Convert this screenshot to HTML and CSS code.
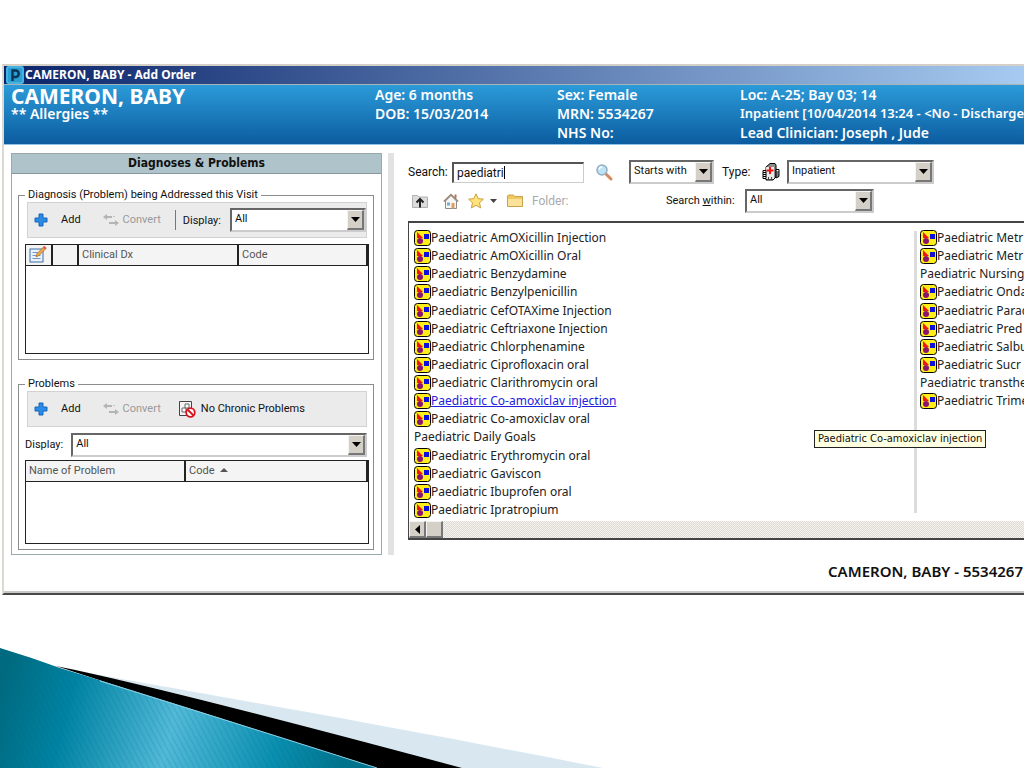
FILE: index.html
```html
<!DOCTYPE html>
<html lang="en">
<head>
    <meta charset="UTF-8">
    <meta name="viewport" content="width=device-width, initial-scale=1.0">
    <title>CAMERON, BABY - Add Order</title>
    <link rel="stylesheet" href="styles.css">
</head>
<body>
    <!-- shared icons -->
    <svg class="sprite" aria-hidden="true">
        <symbol id="careset" viewBox="0 0 17 16">
            <rect x="0.5" y="0.5" width="16" height="15" rx="3" fill="#ffee1a" stroke="#000"/>
            <path d="M3 2v6h6z" fill="#f01414"/>
            <circle cx="6" cy="11" r="3" fill="#8a1470"/>
            <rect x="10" y="4" width="5" height="5" fill="#1010dc"/>
        </symbol>
        <symbol id="plus" viewBox="0 0 14 14">
            <path d="M5 1h4v4h4v4h-4v4h-4v-4h-4v-4h4z" fill="#2b8be6" stroke="#1766b8"/>
        </symbol>
        <symbol id="convert" viewBox="0 0 16 12">
            <path d="M4 0v2h5v2h-5v2l-4-3zM12 6v2h-6v2h6v2l4-3z" fill="#b4b4b4"/>
            <path d="M10 2h2v1h-2z" fill="#c4c4c4"/>
        </symbol>
        <symbol id="down" viewBox="0 0 9 5">
            <path d="M0 0h9l-4.500 5z" fill="#000"/>
        </symbol>
    </svg>

    <div class="window">
        <header class="title-bar">
            <svg class="app-icon" viewBox="0 0 18 18" aria-hidden="true">
                <rect width="18" height="18" rx="2" fill="#2b9fd3"/>
                <rect x="1" y="1" width="16" height="16" rx="2" fill="none" stroke="#63c4ea"/>
                <path d="M6.500 15V4.500H9.500a3 3 0 0 1 0 6.500H6.500" fill="none" stroke="#0a3558" stroke-width="2.400"/>
            </svg>
            <span class="title">CAMERON, BABY - Add Order</span>
        </header>

        <section class="banner">
            <div class="banner-name">
                <h1>CAMERON, BABY</h1>
                <p>** Allergies **</p>
            </div>
            <div class="banner-col">
                <p>Age: 6 months</p>
                <p>DOB: 15/03/2014</p>
            </div>
            <div class="banner-col">
                <p>Sex: Female</p>
                <p>MRN: 5534267</p>
                <p>NHS No:</p>
            </div>
            <div class="banner-col">
                <p>Loc: A-25; Bay 03; 14</p>
                <p class="encounter">Inpatient [10/04/2014 13:24 - &lt;No - Discharge</p>
                <p>Lead Clinician: Joseph , Jude</p>
            </div>
        </section>

        <main class="content">
            <section class="problems-panel">
                <h2>Diagnoses &amp; Problems</h2>

                <fieldset class="group">
                    <legend>Diagnosis (Problem) being Addressed this Visit</legend>
                    <div class="toolbar">
                        <button type="button" class="btn-add"><svg class="icon-plus"><use href="#plus"/></svg>Add</button>
                        <button type="button" class="btn-convert" disabled><svg class="icon-convert"><use href="#convert"/></svg>Convert</button>
                        <label class="toolbar-label" for="dx-display">Display:</label>
                        <span class="combo">
                            <select id="dx-display"><option>All</option></select>
                            <span class="combo-btn"><svg><use href="#down"/></svg></span>
                        </span>
                    </div>
                    <div class="grid-box dx-box">
                        <table>
                            <colgroup><col class="col-icon"><col class="col-icon"><col class="col-dx"><col></colgroup>
                            <thead>
                                <tr>
                                    <th>
                                        <svg class="icon-note" viewBox="0 0 18 17" role="img" aria-label="Annotation">
                                            <rect x="1" y="3" width="13" height="13" fill="#eaf3fc" stroke="#3a6ea5"/>
                                            <path d="M3.500 6.500h6M3.500 9.500h8M3.500 12.500h8" stroke="#6d9bcb"/>
                                            <path d="M7 11l1-3.500 7-7 2 2-7 7z" fill="#f0a94a" stroke="#a5672a" stroke-width="0.700"/>
                                            <path d="M14 1.500l1.500-1.500 2 2-1.500 1.500z" fill="#e0554a"/>
                                        </svg>
                                    </th>
                                    <th></th>
                                    <th>Clinical Dx</th>
                                    <th>Code</th>
                                </tr>
                            </thead>
                        </table>
                    </div>
                </fieldset>

                <fieldset class="group">
                    <legend>Problems</legend>
                    <div class="toolbar">
                        <button type="button" class="btn-add"><svg class="icon-plus"><use href="#plus"/></svg>Add</button>
                        <button type="button" class="btn-convert" disabled><svg class="icon-convert"><use href="#convert"/></svg>Convert</button>
                        <button type="button" class="btn-chronic">
                            <svg class="icon-chronic" viewBox="0 0 17 17" aria-hidden="true">
                                <path d="M0.500 0.500h12v14h-12z" fill="#f4f4f4" stroke="#444"/>
                                <path d="M6 3h4v4h-4zM3 7h4v4h-4z" fill="#fff" stroke="#666"/>
                                <circle cx="11.500" cy="11.500" r="4.300" fill="#fff" stroke="#d8141c" stroke-width="1.800"/>
                                <path d="M8.500 8.500l6 6" stroke="#d8141c" stroke-width="1.800"/>
                            </svg>No Chronic Problems</button>
                    </div>
                    <div class="display-row">
                        <label for="problem-display">Display:</label>
                        <span class="combo">
                            <select id="problem-display"><option>All</option></select>
                            <span class="combo-btn"><svg><use href="#down"/></svg></span>
                        </span>
                    </div>
                    <div class="grid-box problem-box">
                        <table>
                            <colgroup><col class="col-problem"><col></colgroup>
                            <thead>
                                <tr>
                                    <th>Name of Problem</th>
                                    <th>Code <span class="sort-arrow"></span></th>
                                </tr>
                            </thead>
                        </table>
                    </div>
                </fieldset>
            </section>

            <div class="splitter"></div>

            <section class="orders">
                <div class="search-row">
                    <label class="search-label" for="search">Search:</label>
                    <span class="search-box"><input type="text" id="search" value="paediatri"><span class="caret"></span></span>
                    <svg class="icon-search" viewBox="0 0 17 17" role="img" aria-label="Search">
                        <path d="M10 10l5 5" stroke="#d98a5c" stroke-width="3" stroke-linecap="round"/>
                        <circle cx="6" cy="6" r="5" fill="#bfe3f5" stroke="#8fb0c4" stroke-width="1.500"/>
                        <path d="M3 5.500a3 3 0 0 1 3-2.500" fill="none" stroke="#fff" stroke-width="1.500"/>
                    </svg>
                    <span class="combo combo-match">
                        <select aria-label="Match"><option>Starts with</option></select>
                        <span class="combo-btn"><svg><use href="#down"/></svg></span>
                    </span>
                    <label class="type-label" for="type">Type:</label>
                    <svg class="icon-hospital" viewBox="0 0 18 18" aria-hidden="true">
                        <path d="M4 4l4-3.500h5l1 1.500v12l-3 3h-7z" fill="#8c8c8c" stroke="#000"/>
                        <path d="M4 4h8v12h-8z" fill="#e8e8e8"/>
                        <path d="M1 7.500h3v8h-3zM14 6.500h3v7l-3 1.500z" fill="#fff" stroke="#000"/>
                        <path d="M1 9.500h3M1 11.500h3M1 13.500h3M14 9h3M14 11h3M14 13h3" stroke="#000"/>
                        <path d="M6 14h1v2h-1zM9 14h1v2h-1z" fill="#444"/>
                        <path d="M8 4v7M4.500 7.500h7" stroke="#f01010" stroke-width="2"/>
                    </svg>
                    <span class="combo combo-type">
                        <select id="type"><option>Inpatient</option></select>
                        <span class="combo-btn"><svg><use href="#down"/></svg></span>
                    </span>
                </div>

                <div class="folder-row">
                    <button type="button" class="btn-icon" aria-label="Up one level">
                        <svg class="icon-16" viewBox="0 0 16 16">
                            <path d="M0.500 14.500v-12h5l1.500 1.500h8.500v10.500z" fill="#dcdcdc" stroke="#b0b0b0"/>
                            <path d="M8 14.500v-8M4.500 9.500l3.500-3.500 3.500 3.500" fill="none" stroke="#222" stroke-width="2"/>
                        </svg>
                    </button>
                    <button type="button" class="btn-icon" aria-label="Home">
                        <svg class="icon-16" viewBox="0 0 16 16">
                            <path d="M11.500 1.500h2v4h-2z" fill="#b9755a"/>
                            <path d="M2.500 8v7.500h11v-7.500l-5.500-5.500z" fill="#f6f6f2" stroke="#8c8c8c"/>
                            <path d="M0.800 8.500l7.200-7 7.200 7" fill="none" stroke="#9b8577" stroke-width="1.600"/>
                            <path d="M8.500 10h3v5.500h-3z" fill="#dca05c"/>
                            <path d="M4 9.500h3v3h-3z" fill="#7ea9cf"/>
                        </svg>
                    </button>
                    <button type="button" class="btn-icon" aria-label="Favourites">
                        <svg class="icon-16" viewBox="0 0 16 16">
                            <path d="M8 0.800l2.200 4.800 5.200 0.600-3.900 3.500 1.100 5.200-4.600-2.600-4.600 2.600 1.100-5.200-3.900-3.500 5.200-0.600z" fill="#ffe27a" stroke="#cf9f3e"/>
                        </svg>
                        <svg class="icon-small-down" viewBox="0 0 9 5"><path d="M1 0h7l-3.500 4z" fill="#444"/></svg>
                    </button>
                    <button type="button" class="btn-icon" aria-label="Folder">
                        <svg class="icon-16" viewBox="0 0 16 16">
                            <path d="M0.500 13.500v-10.500l1-1h5l1.500 1.500h7.500v10z" fill="#f0c860" stroke="#c9a24a"/>
                            <path d="M1 13v-7h14v7z" fill="#fbe29a"/>
                        </svg>
                    </button>
                    <span class="folder-label">Folder:</span>
                    <label class="within-label" for="within">Search <u>w</u>ithin:</label>
                    <span class="combo combo-within">
                        <select id="within"><option>All</option></select>
                        <span class="combo-btn"><svg><use href="#down"/></svg></span>
                    </span>
                </div>

                <div class="results">
                    <div class="result-columns">
                        <ul class="result-list">
                            <li><svg><use href="#careset"/></svg>Paediatric AmOXicillin Injection</li>
                            <li><svg><use href="#careset"/></svg>Paediatric AmOXicillin Oral</li>
                            <li><svg><use href="#careset"/></svg>Paediatric Benzydamine</li>
                            <li><svg><use href="#careset"/></svg>Paediatric Benzylpenicillin</li>
                            <li><svg><use href="#careset"/></svg>Paediatric CefOTAXime Injection</li>
                            <li><svg><use href="#careset"/></svg>Paediatric Ceftriaxone Injection</li>
                            <li><svg><use href="#careset"/></svg>Paediatric Chlorphenamine</li>
                            <li><svg><use href="#careset"/></svg>Paediatric Ciprofloxacin oral</li>
                            <li><svg><use href="#careset"/></svg>Paediatric Clarithromycin oral</li>
                            <li><svg><use href="#careset"/></svg><a href="#">Paediatric Co-amoxiclav injection</a></li>
                            <li><svg><use href="#careset"/></svg>Paediatric Co-amoxiclav oral</li>
                            <li>Paediatric Daily Goals</li>
                            <li><svg><use href="#careset"/></svg>Paediatric Erythromycin oral</li>
                            <li><svg><use href="#careset"/></svg>Paediatric Gaviscon</li>
                            <li><svg><use href="#careset"/></svg>Paediatric Ibuprofen oral</li>
                            <li><svg><use href="#careset"/></svg>Paediatric Ipratropium</li>
                        </ul>
                        <div class="divider"></div>
                        <ul class="result-list">
                            <li><svg><use href="#careset"/></svg>Paediatric Metr</li>
                            <li><svg><use href="#careset"/></svg>Paediatric Metr</li>
                            <li>Paediatric Nursing</li>
                            <li><svg><use href="#careset"/></svg>Paediatric Onda</li>
                            <li><svg><use href="#careset"/></svg>Paediatric Parac</li>
                            <li><svg><use href="#careset"/></svg>Paediatric Pred</li>
                            <li><svg><use href="#careset"/></svg>Paediatric Salbu</li>
                            <li><svg><use href="#careset"/></svg>Paediatric Sucr</li>
                            <li>Paediatric transthe</li>
                            <li><svg><use href="#careset"/></svg>Paediatric Trime</li>
                        </ul>
                        <div class="tooltip" role="tooltip">Paediatric Co-amoxiclav injection</div>
                    </div>
                    <div class="scrollbar">
                        <button type="button" class="scroll-btn" aria-label="Scroll left"><svg viewBox="0 0 5 9"><path d="M5 0v9l-5-4.500z"/></svg></button>
                        <span class="scroll-thumb"></span>
                    </div>
                </div>
            </section>
        </main>

        <footer class="status">CAMERON, BABY - 5534267</footer>
    </div>

    <svg class="swoosh" viewBox="0 0 620 120" aria-hidden="true">
        <defs>
            <linearGradient id="teal" gradientUnits="userSpaceOnUse" x1="0" y1="40" x2="340" y2="130">
                <stop offset="0" stop-color="#006a80"/>
                <stop offset="0.200" stop-color="#0083a3"/>
                <stop offset="0.500" stop-color="#52b9d8"/>
                <stop offset="0.800" stop-color="#0a8fb0"/>
                <stop offset="1" stop-color="#00738c"/>
            </linearGradient>
            <pattern id="stripes" width="5" height="5" patternUnits="userSpaceOnUse" patternTransform="rotate(-28)">
                <path d="M0.500 0v5" stroke="#00627c" stroke-opacity="0.180"/>
            </pattern>
        </defs>
        <path d="M80 23C110 30 330 66 603 120H440z" fill="#d9e8f0"/>
        <path d="M56 18Q160 39 462 120H370z" fill="#000"/>
        <path d="M0 0Q30 9 60 20Q190 60 377 120H0z" fill="url(#teal)"/>
        <path d="M0 0Q30 9 60 20Q190 60 377 120H0z" fill="url(#stripes)"/>
        <path d="M100 33Q210 67 377 120" fill="none" stroke="#8fd0e4"/>
    </svg>
</body>
</html>
```

FILE: styles.css
```css
* {
    box-sizing: border-box;
}

body {
    margin: 0;
    padding-top: 64px;
    min-height: 100vh;
    display: flex;
    flex-direction: column;
    overflow: hidden;
    background-color: #fff;
    color: #111;
    font-family: "Roboto", "Liberation Sans", sans-serif;
    font-size: 11px;
    line-height: 14px;
}

h1, h2, p, ul {
    margin: 0;
    padding: 0;
}

button, input, select {
    font: inherit;
    color: inherit;
}

.sprite {
    display: none;
}

.window {
    margin-left: 2px;
    border-left: 2px solid #dcd9d2;
    border-top: 2px solid #d4d0c8;
    border-bottom: 2px solid #484848;
    white-space: nowrap;
    overflow: hidden;
}

/* title bar */
.title-bar {
    height: 18px;
    padding-left: 2px;
    display: flex;
    align-items: center;
    gap: 1px;
    background: linear-gradient(to right, #0a246a, #a6caf0);
    color: #fff;
    font-family: "Noto Sans", sans-serif;
    font-size: 12px;
    font-weight: bold;
}

.app-icon {
    width: 18px;
    height: 18px;
}

/* patient banner */
.banner {
    height: 61px;
    padding-left: 7px;
    display: grid;
    grid-template-columns: 364px 182px 183px 1fr;
    background: linear-gradient(to bottom, #2c9bd9, #0b5c9f);
    border-top: 1px solid #a9b4b4;
    border-bottom: 1px solid #8fc0e6;
    color: #fff;
    font-family: "Noto Sans", sans-serif;
    font-size: 14px;
    font-weight: 600;
    line-height: 19px;
}

.banner-name h1 {
    font-size: 21px;
    font-weight: bold;
    line-height: 23px;
}

.banner-name p {
    line-height: 11px;
}

.banner-col .encounter {
    font-size: 13px;
}

/* main area */
.content {
    padding: 8px 0 0 7px;
    display: flex;
}

.problems-panel {
    width: 371px;
    padding-bottom: 4px;
    border: 1px solid #9aa9ad;
    flex-shrink: 0;
}

.problems-panel h2 {
    height: 20px;
    margin-bottom: 14px;
    background-color: #aec3ca;
    border-bottom: 1px solid #8799a0;
    font-family: "DejaVu Sans Condensed", "DejaVu Sans", sans-serif;
    font-size: 12px;
    line-height: 19px;
    text-align: center;
}

.group {
    margin: 0 7px 17px 6px;
    padding: 0 4px 5px 6px;
    border: 1px solid #8c8c8c;
}

.group:last-child {
    margin-bottom: 0;
}

.group legend {
    padding: 0 3px;
}

.toolbar {
    height: 36px;
    margin: 0 2px 6px 2px;
    padding-left: 6px;
    display: flex;
    align-items: center;
    background-color: #ebebeb;
    border: 1px solid #d2d2d2;
}

.toolbar button {
    padding: 0;
    display: flex;
    align-items: center;
    border: none;
    background: none;
}

.toolbar .btn-add {
    gap: 13px;
    margin-right: 22px;
}

.toolbar .btn-convert {
    gap: 4px;
    margin-right: 14px;
    color: #999;
}

.toolbar .btn-chronic {
    gap: 5px;
    margin-left: 4px;
}

.icon-plus {
    width: 14px;
    height: 14px;
}

.icon-convert {
    width: 16px;
    height: 12px;
}

.icon-chronic {
    width: 17px;
    height: 17px;
}

.toolbar-label {
    height: 20px;
    margin-right: 9px;
    padding-left: 7px;
    border-left: 1px solid #777;
    line-height: 22px;
}

/* drop-downs */
.combo {
    height: 24px;
    flex: 1;
    display: flex;
    background-color: #fff;
    border: 2px solid #666;
    border-right-color: #ccc;
    border-bottom-color: #ccc;
}

.combo select {
    min-width: 0;
    padding: 0 3px 2px;
    flex: 1;
    appearance: none;
    border: none;
    border-radius: 0;
    background: none;
}

.combo-btn {
    width: 17px;
    display: flex;
    align-items: center;
    justify-content: center;
    background-color: #d4d0c8;
    border: 1px solid #f4f4f4;
    border-right: 2px solid #777;
    border-bottom: 2px solid #777;
    pointer-events: none;
}

.combo-btn svg {
    width: 9px;
    height: 5px;
}

/* tables */
.grid-box {
    border: 1px solid #222;
    background-color: #fff;
}

.dx-box {
    height: 110px;
}

.problem-box {
    height: 84px;
}

.grid-box table {
    width: 100%;
    table-layout: fixed;
    border-collapse: collapse;
}

.grid-box th {
    height: 20px;
    padding: 0 3px;
    background-color: #f4f4f4;
    border-right: 2px solid #222;
    border-bottom: 1px solid #222;
    color: #555;
    font-weight: normal;
    text-align: left;
}

.col-icon {
    width: 26px;
}

.col-dx {
    width: 160px;
}

.col-problem {
    width: 159px;
}

.icon-note {
    width: 18px;
    height: 17px;
    display: block;
}

.sort-arrow {
    display: inline-block;
    margin: 0 0 2px 3px;
    border: 4px solid transparent;
    border-top: none;
    border-bottom-color: #555;
}

.display-row {
    margin: 0 2px 3px 0;
    display: flex;
    align-items: center;
    gap: 8px;
}

.splitter {
    width: 6px;
    margin: 0 14px 0 6px;
    flex-shrink: 0;
    background-color: #e2e2e2;
}

/* order search */
.orders {
    flex: 1;
    min-width: 0;
}

.search-row {
    padding-top: 7px;
    display: flex;
    align-items: center;
}

.search-label {
    width: 44px;
    font-size: 12px;
}

.search-box {
    width: 132px;
    height: 21px;
    margin-right: 12px;
    padding-left: 3px;
    display: flex;
    align-items: center;
    border: 1px solid #ccc;
    border-top: 2px solid #555;
    border-left: 2px solid #555;
    font-size: 12px;
}

.search-box input {
    padding: 0;
    field-sizing: content;
    border: none;
    outline: none;
    background: none;
}

.caret {
    width: 1px;
    height: 13px;
    background-color: #000;
}

.icon-search {
    width: 17px;
    height: 17px;
    margin-right: 16px;
}

.combo-match {
    flex: none;
    width: 85px;
    margin-right: 8px;
}

.type-label {
    width: 40px;
    font-size: 12px;
}

.icon-hospital {
    width: 18px;
    height: 18px;
    margin-right: 7px;
}

.combo-type {
    flex: none;
    width: 147px;
}

.folder-row {
    padding: 5px 0 8px 4px;
    display: flex;
    align-items: center;
}

.btn-icon {
    margin-right: 9px;
    padding: 0;
    display: flex;
    align-items: center;
    gap: 5px;
    border: none;
    background: none;
}

.btn-icon:first-child {
    margin-right: 15px;
}

.icon-16 {
    width: 16px;
    height: 16px;
}

.icon-small-down {
    width: 9px;
    height: 5px;
}

.folder-label {
    width: 134px;
    color: #aaa;
    font-size: 12px;
}

.within-label {
    width: 79px;
}

.combo-within {
    flex: none;
    width: 129px;
}

/* results */
.results {
    border: 1px solid #444;
    border-top-width: 2px;
    border-bottom-width: 2px;
    border-right: none;
}

.result-columns {
    height: 298px;
    padding: 6px 0 2px 5px;
    display: grid;
    grid-template-columns: 497px 3px 1fr;
    column-gap: 3px;
    overflow: hidden;
    position: relative;
}

.result-list {
    min-width: 0;
    display: grid;
    grid-template-rows: repeat(16, 1fr);
    list-style: none;
    color: #222;
    font-family: "Noto Sans", sans-serif;
    font-size: 12px;
}

.result-list li {
    display: flex;
    align-items: center;
}

.result-list svg {
    width: 17px;
    height: 16px;
    flex-shrink: 0;
}

.result-list a {
    color: #2222dd;
}

.divider {
    margin: 2px 0 6px;
    background-color: #dcdcdc;
}

.tooltip {
    position: absolute;
    left: 405px;
    top: 207px;
    padding: 1px 3px;
    background-color: #ffffe1;
    border: 1px solid #222;
    font-family: "DejaVu Sans Condensed", "DejaVu Sans", sans-serif;
    font-size: 11px;
}

.scrollbar {
    height: 17px;
    display: flex;
    background: repeating-conic-gradient(#dedbd5 0 25%, #f4f3f0 0 50%) 0 0 / 2px 2px;
}

.scroll-btn, .scroll-thumb {
    width: 17px;
    padding: 0;
    display: flex;
    align-items: center;
    justify-content: center;
    background-color: #d4d0c8;
    border: 1px solid #f4f4f4;
    border-right: 2px solid #777;
    border-bottom: 2px solid #777;
}

.scroll-btn svg {
    width: 5px;
    height: 9px;
}

.status {
    height: 38px;
    padding: 7px 1px 0 0;
    border-bottom: 2px solid #c8c8c4;
    font-family: "Noto Sans", sans-serif;
    font-size: 15px;
    font-weight: 600;
    line-height: 18px;
    text-align: right;
}

.swoosh {
    width: 620px;
    height: 120px;
    margin-top: auto;
    display: block;
}
```
